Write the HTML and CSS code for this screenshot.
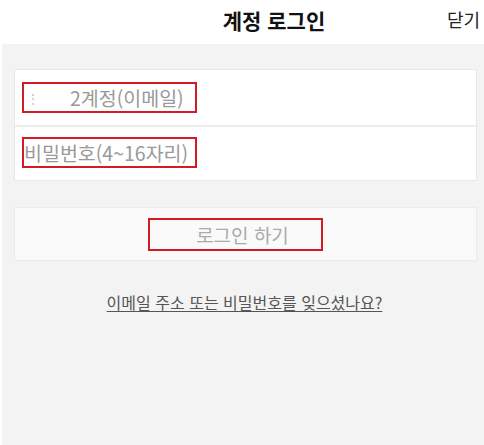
FILE: index.html
```html
<!DOCTYPE html>
<html lang="ko">
<head>
    <meta charset="UTF-8">
    <meta name="viewport" content="width=device-width, initial-scale=1.0">
    <title>계정 로그인</title>
    <link rel="stylesheet" href="styles.css">
</head>
<body>
    <header class="topbar">
        <h1 class="title">계정 로그인</h1>
        <span class="close">닫기</span>
    </header>
    <main class="content">
        <div class="fields">
            <div class="field">
                <span class="mark"><span class="dots">⋮</span><span class="pad">2계정(이메일)</span></span>
            </div>
            <div class="field">
                <span class="mark">비밀번호(4~16자리)</span>
            </div>
        </div>
        <div class="submit">
            <span class="mark wide">로그인 하기</span>
        </div>
        <p class="forgot"><a href="#">이메일 주소 또는 비밀번호를 잊으셨나요?</a></p>
    </main>
</body>
</html>
```

FILE: styles.css
```css
* {
    box-sizing: border-box;
}

body {
    margin: 0;
    height: 445px;
    background: #fff;
    font-family: "Noto Sans CJK KR", "Noto Sans", sans-serif;
    display: flex;
    flex-direction: column;
    overflow: hidden;
}

.topbar {
    height: 44px;
    display: flex;
    align-items: center;
    justify-content: center;
    position: relative;
}

.title {
    margin: 0 0 4px;
    font-size: 21px;
    font-weight: 700;
    color: #111;
    padding-left: 64px;
}

.close {
    position: absolute;
    right: 4px;
    top: 6px;
    font-size: 18px;
    color: #222;
}

.content {
    flex: 1;
    margin-left: 2px;
    background: #f3f3f3;
    padding: 25px 7px 0 12px;
}

.fields {
    background: #fff;
    border: 1px solid #e8e8e8;
}

.field {
    height: 55px;
    padding: 12px 0 0 7px;
}

.field + .field {
    border-top: 2px solid #ececec;
    padding-top: 10px;
}

.mark {
    display: inline-flex;
    align-items: center;
    height: 31px;
    width: 175px;
    border: 2px solid #d11c24;
    font-size: 19.5px;
    color: #999;
    padding-left: 0;
    white-space: nowrap;
    overflow: hidden;
}

.dots {
    color: #bbb;
    font-size: 12px;
    width: 46px;
    padding-left: 3px;
}

.submit {
    margin-top: 26px;
    height: 54px;
    background: #fafafa;
    border: 1px solid #ebebeb;
    display: flex;
    align-items: center;
    justify-content: center;
    padding-right: 20px;
}

.mark.wide {
    width: 175px;
    height: 33px;
    justify-content: center;
    font-size: 19px;
    color: #aaa;
    padding-left: 14px;
}

.forgot {
    margin: 29px 0 0;
    text-align: center;
    font-size: 16px;
    padding-right: 2px;
}

.forgot a {
    color: #555;
    text-decoration: underline;
    text-underline-offset: 2px;
}
```
